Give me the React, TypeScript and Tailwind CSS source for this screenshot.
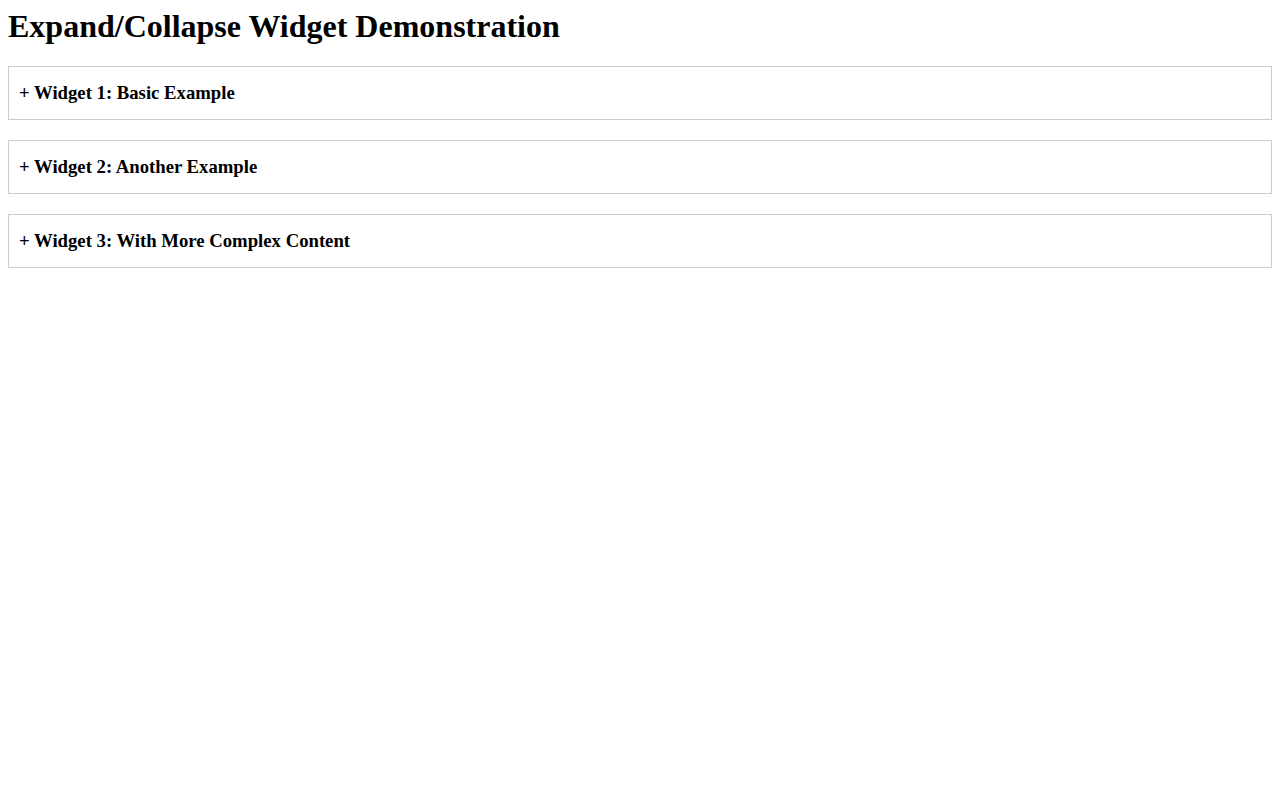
import { useState } from 'react'

interface WidgetProps {
  title: string
  children: React.ReactNode
}

function Widget({ title, children }: WidgetProps) {
  const [open, setOpen] = useState(false)

  return (
    <div className="mb-5 border border-[#cccccc]">
      <h3
        onClick={() => setOpen(!open)}
        className="cursor-pointer select-none px-[10px] py-[15px] text-[18.72px] font-bold leading-[normal]"
      >
        {open ? '−' : '+'} {title}
      </h3>
      {open && <div className="px-[10px] pb-[15px] text-base">{children}</div>}
    </div>
  )
}

export default function App() {
  return (
    <div className="min-h-screen bg-white p-2 text-black" style={{ fontFamily: '"Liberation Serif", "Times New Roman", serif' }}>
      <h1 className="mb-[21.44px] text-[32px] font-bold leading-[normal]">Expand/Collapse Widget Demonstration</h1>

      <Widget title="Widget 1: Basic Example">
        <p>This is the content of the first widget. Click the header to collapse it again.</p>
      </Widget>

      <Widget title="Widget 2: Another Example">
        <p>Some more hidden content lives here.</p>
      </Widget>

      <Widget title="Widget 3: With More Complex Content">
        <ul className="list-disc pl-10">
          <li>First item</li>
          <li>Second item</li>
          <li>Third item</li>
        </ul>
      </Widget>
    </div>
  )
}
